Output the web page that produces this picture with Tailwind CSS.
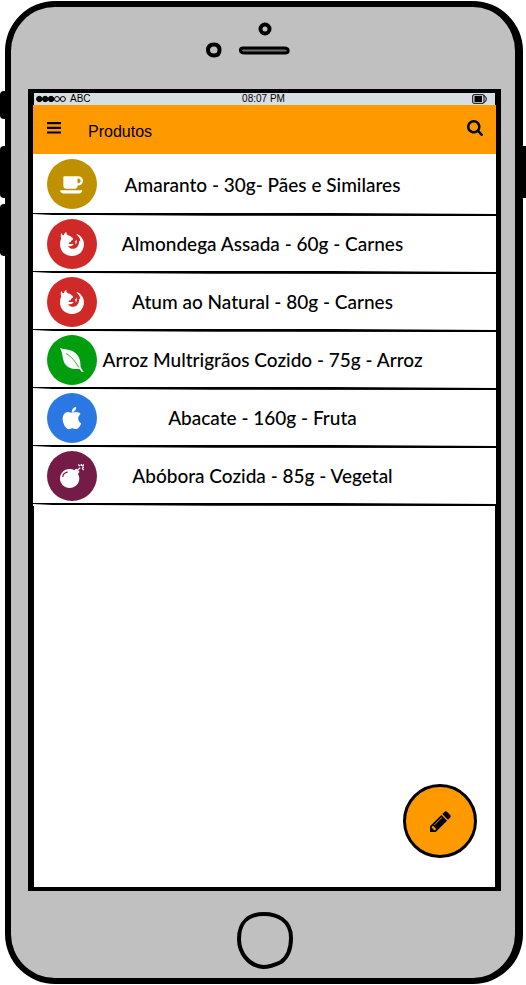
<!DOCTYPE html>
<html lang="pt">
<head>
<meta charset="utf-8">
<meta name="viewport" content="width=device-width, initial-scale=1">
<title>Produtos</title>
<script src="https://cdn.jsdelivr.net/npm/@tailwindcss/browser@4"></script>
</head>
<body class="bg-white text-black font-['Liberation_Sans',Arial,sans-serif]">
<svg class="hidden" aria-hidden="true">
  <symbol id="divider" viewBox="0 0 464 3" preserveAspectRatio="none">
    <path d="M0 0H300L464 1V3H420L180 2.700L60 2H20L0 1Z"/>
  </symbol>
  <symbol id="firefox" viewBox="0 0 24 24">
    <path fill="#fff" d="M1.200 1C1.700 2.200 2.600 3 3.800 3.200C4.200 1.700 5 .600 6.300 0C6.300 1.800 7 2.900 8.600 3.500L12.500 4.500L15 4.500L17 2C21 3.500 23.900 7.500 24 12C24 19 19 24 12 24S0 19 0 12.500C0 10 .4 8 1.200 6.500C.6 4.500.6 2.500 1.200 1Z"/>
    <path fill="#cf2a27" d="M14.500 1L17.500 3.500C19.500 5.500 20.500 7.500 20.200 9.500L19 8.500C19.500 12.500 17.500 16.500 13.500 16.800C11 17 9 16 8 14C10 14.800 11.500 14.200 12.800 13.200C14 12.500 13.500 11.600 12.500 11.800C11.300 12.200 10.200 11.800 8.300 11.400C8.800 10.300 9.800 10 10.800 10.200C10.600 8.800 12.400 8.200 13 7.200C13.200 6 12.500 5.500 11.500 5.200L10 3.500L12 1Z"/>
    <path fill="#fff" d="M14.600 9.500C15.800 9.300 16.300 8.400 16.100 7.200C17.300 9 17 11.500 15.600 12.500C15.800 11.200 15.400 10.200 14.600 9.500Z"/>
  </symbol>
</svg>

<div class="flex min-h-screen flex-col pb-px pl-[5px] pr-[3px] pt-px">
  <div class="relative flex flex-1 flex-col rounded-[50px] border-y-6 border-l-6 border-r-8 border-black bg-[#c0c0c0]">
    <span class="absolute -left-[11px] top-[84px] h-7 w-2 rounded-sm bg-black"></span>
    <span class="absolute -left-[11px] top-[139px] h-[52px] w-2 rounded-sm bg-black"></span>
    <span class="absolute -left-[11px] top-[197px] h-[52px] w-2 rounded-sm bg-black"></span>
    <span class="absolute -right-[11px] top-[139px] h-[52px] w-2 bg-black"></span>

    <div class="flex h-[82px] justify-center pt-3">
      <svg class="h-10 w-[116px]" viewBox="0 0 116 40" fill="none" stroke="#000" stroke-width="4" aria-hidden="true">
        <path d="M9 25.500C12.500 25.500 14.500 27.500 14.500 31S12.500 36.500 9 36.500S3 34.500 3 31S5 25.500 9 25.500Z"/>
        <circle cx="60" cy="10" r="4.500"/>
        <path d="M38 29H79Q84 29 83 32.500Q83 34 80 34H40Q35 34 35.500 31Q35.500 29 38 29Z" fill="#707070" stroke-width="3"/>
      </svg>
    </div>

    <main class="relative ml-[17px] mr-[14px] flex flex-1 flex-col border-x-5 border-y-4 border-black bg-black">
      <div class="mx-px grid h-3 grid-cols-3 items-center bg-[#d7dfe3] pl-[2px] pr-2 text-[10px] leading-[10px]">
        <span class="flex items-center gap-1">
          <svg class="h-2 w-[30px]" viewBox="0 0 30 8" stroke="#000" aria-label="Sinal">
            <circle cx="3.300" cy="4" r="2.700"/><circle cx="9.200" cy="4" r="2.700"/><circle cx="15.100" cy="4" r="2.700"/>
            <circle cx="21" cy="4" r="2.500" fill="none"/><circle cx="26.900" cy="4" r="2.500" fill="none"/>
          </svg>
          ABC
        </span>
        <span class="pl-1 text-center">08:07 PM</span>
        <svg class="h-[10px] w-[15px] justify-self-end" viewBox="0 0 15 10" fill="none" stroke="#000" aria-label="Bateria">
          <path d="M2 .700H11Q12 .700 12 2V8Q12 9.300 11 9.300H2Q.700 9.300.700 8V2Q.700.700 2 .700ZM12 1.500Q14.300 2.500 14.300 5T12 8.500"/>
          <path fill="#000" stroke="none" d="M2.500 2H10V8H2.500Z"/>
        </svg>
      </div>

      <header class="flex h-[49px] items-center bg-[#ff9900] pl-[14px] pr-[13px]">
        <button type="button" aria-label="Menu" class="-mt-1">
          <svg class="h-3 w-[15px]" viewBox="0 0 15 12"><path d="M0 0H14V2.200H0ZM0 4.700H14V6.900H0ZM0 9.400H14V11.600H0Z"/></svg>
        </button>
        <h1 class="ml-[26px] mt-1 flex-1 text-base">Produtos</h1>
        <button type="button" aria-label="Buscar" class="-mt-1">
          <svg class="h-4 w-4" viewBox="64 128 1664 1664"><path d="M1216 832q0-185-131.500-316.500t-316.500-131.500-316.500 131.500-131.500 316.500 131.500 316.500 316.500 131.500 316.500-131.500 131.500-316.500zm512 832q0 52-38 90t-90 38q-54 0-90-38l-343-342q-179 124-399 124-143 0-273.500-55.500t-225-150-150-225-55.500-273.500 55.500-273.500 150-225 225-150 273.500-55.500 273.500 55.500 225 150 150 225 55.500 273.500q0 220-124 399l343 343q37 37 37 90z"/></svg>
        </button>
      </header>

      <ul class="bg-white font-['Lato','Noto_Sans',sans-serif] text-[19px] font-medium leading-7">
        <li>
          <a href="#" class="grid h-[59px] items-center">
            <span class="col-start-1 row-start-1 ml-[14px] flex size-[50px] items-center justify-center rounded-full bg-[#bf9000]">
              <svg class="h-[22px] w-6" viewBox="0 0 1920 1792" fill="#fff"><path d="M1664 640q0-80-56-136t-136-56h-64v384h64q80 0 136-56t56-136zm-1664 768h1792q0 106-75 181t-181 75h-1280q-106 0-181-75t-75-181zm1856-768q0 159-112.500 271.500t-271.500 112.500h-64v32q0 92-66 158t-158 66h-704q-92 0-158-66t-66-158v-736q0-26 19-45t45-19h1152q159 0 271.500 112.500t112.500 271.500z"/></svg>
            </span>
            <span class="col-start-1 row-start-1 pr-1 pt-[2px] text-center">Amaranto - 30g- Pães e Similares</span>
          </a>
          <svg class="block h-[3px] w-full"><use href="#divider"/></svg>
        </li>
        <li>
          <a href="#" class="grid h-[55px] items-center">
            <span class="col-start-1 row-start-1 ml-[14px] flex size-[50px] items-center justify-center rounded-full bg-[#cf2a27]">
              <svg class="size-6"><use href="#firefox"/></svg>
            </span>
            <span class="col-start-1 row-start-1 pr-1 text-center">Almondega Assada - 60g - Carnes</span>
          </a>
          <svg class="block h-[3px] w-full"><use href="#divider"/></svg>
        </li>
        <li>
          <a href="#" class="grid h-[55px] items-center">
            <span class="col-start-1 row-start-1 ml-[14px] flex size-[50px] items-center justify-center rounded-full bg-[#cf2a27]">
              <svg class="size-6"><use href="#firefox"/></svg>
            </span>
            <span class="col-start-1 row-start-1 pr-1 text-center">Atum ao Natural - 80g - Carnes</span>
          </a>
          <svg class="block h-[3px] w-full"><use href="#divider"/></svg>
        </li>
        <li>
          <a href="#" class="grid h-[55px] items-center">
            <span class="col-start-1 row-start-1 ml-[14px] flex size-[50px] items-center justify-center rounded-full bg-[#009e0f]">
              <svg class="size-6" viewBox="0 0 24 24"><path fill="#fff" d="M0 0C3 1.200 7 1 11 2.500C17.500 5 20.800 10 20.500 18.500C21.200 20.500 22.500 22.500 24 24.200L23 25C21.500 23.800 20.500 22.200 19.200 20.800C14 21.500 8 20.500 5 16C2.200 11.500 3 5 0 0Z"/><path fill="none" stroke="#009e0f" stroke-width=".8" d="M6 5.500C11.500 8.500 15.500 13.500 18.800 19.500"/></svg>
            </span>
            <span class="col-start-1 row-start-1 pr-1 text-center">Arroz Multrigrãos Cozido - 75g - Arroz</span>
          </a>
          <svg class="block h-[3px] w-full"><use href="#divider"/></svg>
        </li>
        <li>
          <a href="#" class="grid h-[55px] items-center">
            <span class="col-start-1 row-start-1 ml-[14px] flex size-[50px] items-center justify-center rounded-full bg-[#2b78e4]">
              <svg class="size-6" viewBox="0 0 1792 1664" fill="#fff"><path d="M1585 1215q-39 125-123 250-129 196-257 196-49 0-140-32-86-32-151-32-61 0-142 33-81 34-132 34-152 0-301-259-147-261-147-503 0-228 113-374 113-144 284-144 72 0 177 30 104 30 138 30 45 0 143-34 102-34 173-34 119 0 213 65 52 36 104 100-79 67-114 118-65 94-65 207 0 124 69 223t158 126zm-376-1173q0 61-29 136-30 75-93 138-54 54-108 72-37 11-104 17 3-149 78-257 74-107 250-148 1 3 2.500 11t2.500 11q0 4 .5 10t.5 10z"/></svg>
            </span>
            <span class="col-start-1 row-start-1 pr-1 text-center">Abacate - 160g - Fruta</span>
          </a>
          <svg class="block h-[3px] w-full"><use href="#divider"/></svg>
        </li>
        <li>
          <a href="#" class="grid h-[55px] items-center">
            <span class="col-start-1 row-start-1 ml-[14px] flex size-[50px] items-center justify-center rounded-full bg-[#741b47]">
              <svg class="size-6" viewBox="0 0 24 24"><path fill="#fff" d="M9.500 5C11.500 5 13 5.400 14.500 6.200L15.700 5Q16.300 4.500 16.900 5L19.200 7.300Q19.600 7.900 19.100 8.500L17.900 9.700C18.700 11.200 19.300 12.800 19.300 14.600C19.300 20 15 24 9.600 24S0 20 0 14.600S4.200 5 9.500 5Z"/><path fill="none" stroke="#741b47" stroke-width="1.200" stroke-linecap="round" d="M2.800 12.500C3.200 10.300 4.900 8.700 7.200 8.200"/><path fill="none" stroke="#fff" stroke-width="1.300" d="M17.300 6.500L20.200 3.600M18.200.500L19.900 2.100M21.300 0V2M24 .500L22.200 2.200M22.400 3.300H24.500M22.100 4.200L23.800 6"/></svg>
            </span>
            <span class="col-start-1 row-start-1 pr-1 text-center">Abóbora Cozida - 85g - Vegetal</span>
          </a>
          <svg class="block h-[3px] w-full"><use href="#divider"/></svg>
        </li>
      </ul>

      <div class="mx-px flex-1 bg-white"></div>

      <button type="button" aria-label="Editar" class="absolute bottom-[29px] right-[19px] flex size-[74px] items-center justify-center rounded-full border-3 border-black bg-[#ff9900]">
        <svg class="mt-px size-[21px]" viewBox="128 128 1536 1536"><path d="M491 1536l91-91-235-235-91 91v107h128v128h107zm523-928q0-22-22-22-10 0-17 7l-542 542q-7 7-7 17 0 22 22 22 10 0 17-7l542-542q7-7 7-17zm-54-192l416 416-832 832h-416v-416zm683 96q0 53-37 90l-166 166-416-416 166-165q36-38 90-38 53 0 91 38l235 234q37 39 37 91z"/></svg>
      </button>
    </main>

    <div class="flex h-[87px] justify-center pl-[3px] pt-5">
      <button type="button" aria-label="Início" class="h-[58px] w-14">
        <svg class="size-full" viewBox="0 0 56 58" fill="none" stroke="#000" stroke-width="4"><path d="M27 3C40 3 54 9 54 27C54 39 51 46 44 51C38 54 32 56 26 56C12 55 2 42 2 28C2 11 12 3 27 3Z"/></svg>
      </button>
    </div>
  </div>
</div>
</body>
</html>
